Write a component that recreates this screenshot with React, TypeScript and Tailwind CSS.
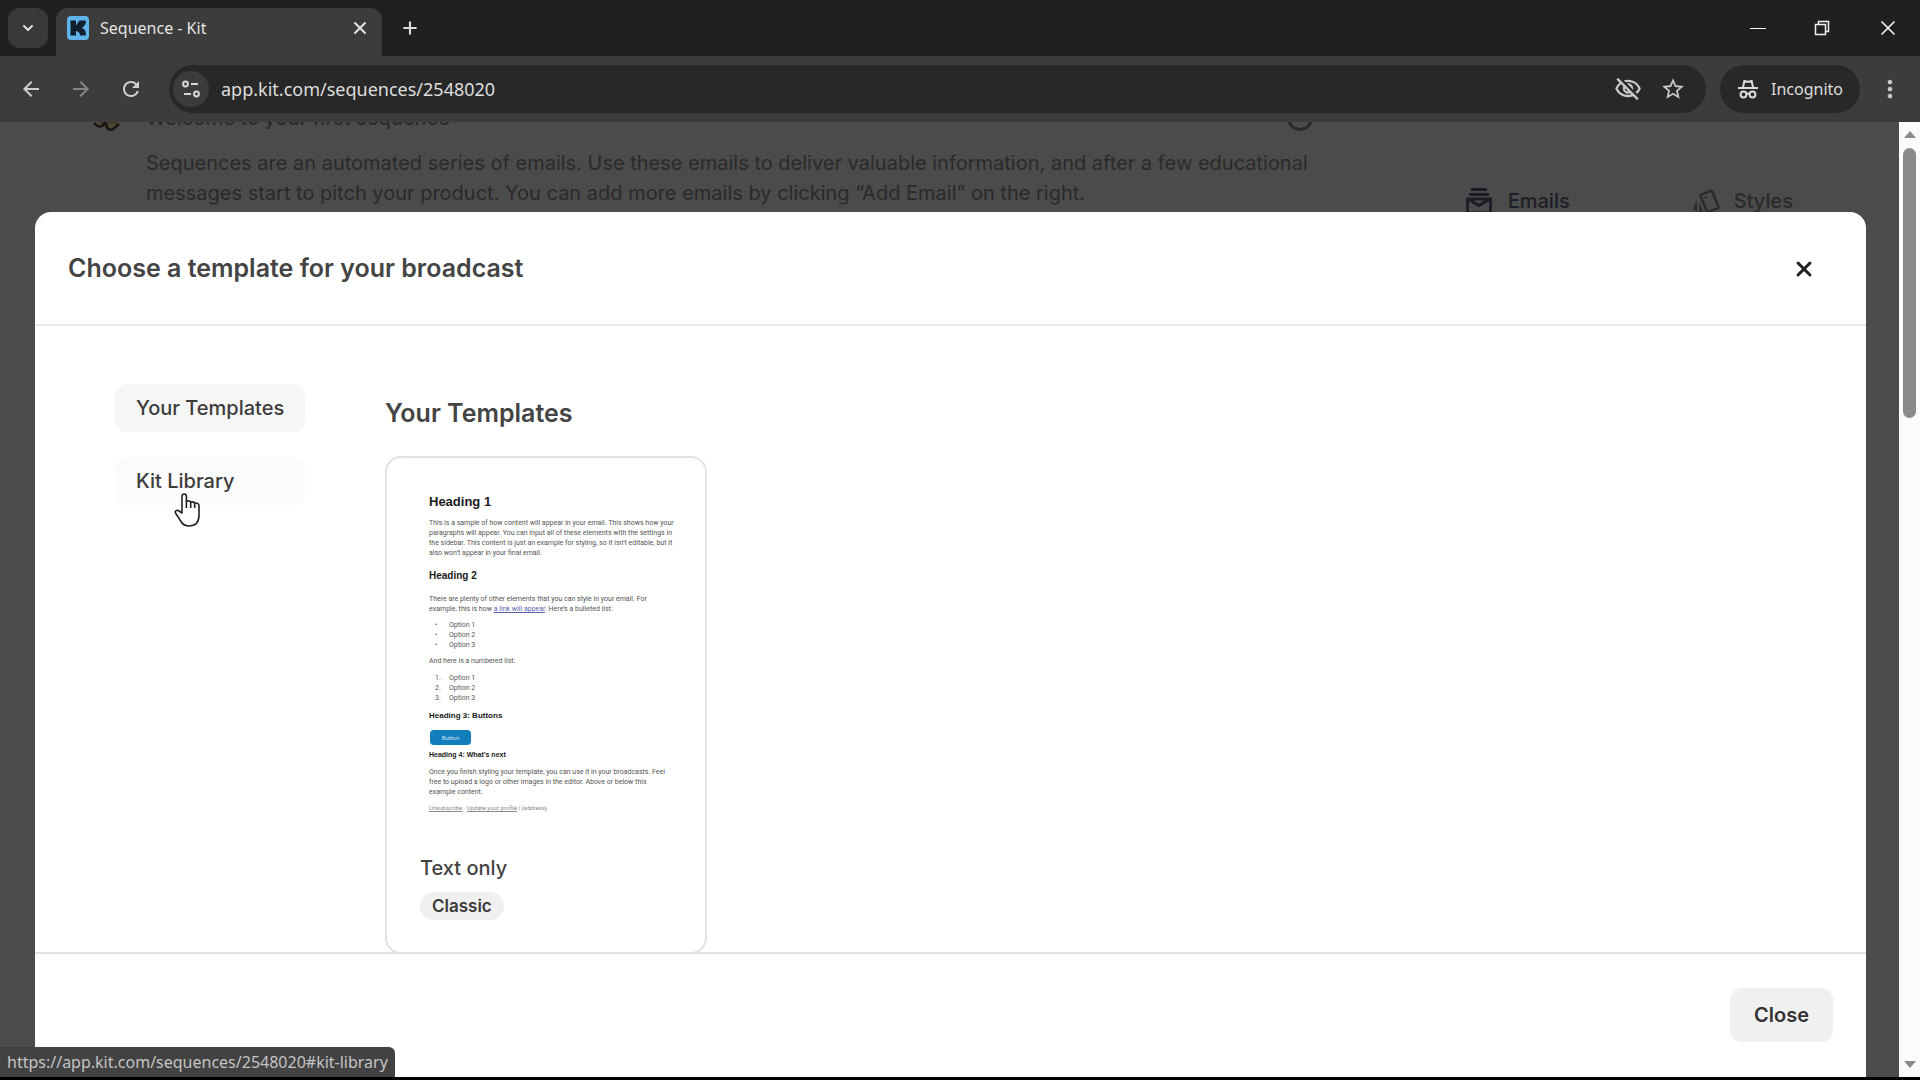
import type { ReactNode } from "react";
import { ChevronDown, Plus, X } from "lucide-react";
import {
  MdArrowBack,
  MdArrowForward,
  MdMoreVert,
  MdOutlineStyle,
  MdOutlineVisibilityOff,
  MdRefresh,
  MdStarBorder,
} from "react-icons/md";

function KitLogo() {
  return (
    <svg viewBox="0 0 24 24" className="size-6 shrink-0" aria-hidden="true">
      <rect x="1" width="22" height="24" rx="4" fill="#5fb4ea" />
      <path
        d="M4.500 4.500h5.500v5l3.500-5h6.500c0 4-2 6.500-4.500 7.300 3 .8 4.500 3.500 4.500 7.700h-6c0-2.500-1.300-4.300-4-4.600v4.600H4.500z"
        fill="#10202e"
      />
    </svg>
  );
}

function SiteInfoIcon() {
  return (
    <svg viewBox="0 0 20 20" className="size-5" fill="none" stroke="#d6d6d6" strokeWidth="2" aria-hidden="true">
      <circle cx="4.500" cy="5" r="2.400" />
      <path d="M10 5h7M3 15h7" />
      <circle cx="15.500" cy="15" r="2.400" />
    </svg>
  );
}

function IncognitoIcon() {
  return (
    <svg viewBox="0 0 22 22" className="size-[22px]" fill="none" stroke="#dcdcdc" strokeWidth="2" aria-hidden="true">
      <path d="M6 9.500 7.300 3q2 .8 3.700.8t3.700-.8L16 9.500M1 10h20" />
      <circle cx="6.500" cy="16.500" r="2.900" />
      <circle cx="15.500" cy="16.500" r="2.900" />
      <path d="M9.400 16q1.600-1 3.200 0" />
    </svg>
  );
}

function RestoreIcon() {
  return (
    <svg viewBox="0 0 16 16" className="size-4" fill="none" stroke="#f0f0f0" strokeWidth="1.500" aria-hidden="true">
      <path d="M1.500 4.500h10v10h-10zM4.500 4.500v-3h10v10h-3" />
    </svg>
  );
}

function EmailsIcon() {
  return (
    <svg viewBox="0 0 26 28" className="h-7 w-[26px]" fill="none" stroke="currentColor" strokeWidth="2.800" aria-hidden="true">
      <path d="M5 2.500h16M3 7.500h20" />
      <path d="M1.500 12h23v14h-23zM3 12.500l10 6 10-6" />
    </svg>
  );
}

function BeeIcon() {
  return (
    <svg viewBox="0 0 28 28" className="size-7" aria-hidden="true">
      <ellipse cx="17" cy="17" rx="10" ry="8" fill="#3f3a20" />
      <path d="M2 20q4 5 8 3l3-4 3 7 4 1 7-6" fill="#4d4832" stroke="#161616" strokeWidth="2.500" />
    </svg>
  );
}

function HandCursor() {
  return (
    <svg
      viewBox="0 0 26 34"
      className="pointer-events-none absolute left-[59px] top-9 h-[34px] w-[26px]"
      fill="#fff"
      stroke="#222"
      strokeWidth="1.600"
      strokeLinejoin="round"
      aria-hidden="true"
    >
      <path d="M8 20V3.500Q8 1 10.200 1t2.200 2.500V8q3.600-.6 4.300 1 3-.4 4 1 4.300-.4 4.300 3v9q0 11-10 11-5.500 0-8-4.500L1.500 20Q.8 18 2.500 17.500t3.300 1z" />
      <path d="M12.400 8v7M16.700 9v6M20.700 10v5" fill="none" />
    </svg>
  );
}

function TabStrip() {
  return (
    <header className="flex h-14 shrink-0 items-end bg-[#202020] pl-2">
      <button aria-label="Search tabs" className="mb-2 grid h-10 w-10 place-items-center rounded-xl bg-[#393939] text-[#e0e0e0]">
        <ChevronDown className="size-4" strokeWidth={3} />
      </button>
      <div className="ml-2 flex h-12 w-[326px] items-center rounded-t-xl bg-[#3c3c3c] pb-2 pl-2.5 pr-2.5">
        <KitLogo />
        <span className="ml-2.5 flex-1 text-base text-[#e4e4e4]">Sequence - Kit</span>
        <button aria-label="Close tab" className="grid size-6 place-items-center text-[#e0e0e0]">
          <X className="size-5" strokeWidth={2.5} />
        </button>
      </div>
      <button aria-label="New tab" className="mb-4 ml-4 grid size-6 place-items-center text-[#dcdcdc]">
        <Plus className="size-5" strokeWidth={2.5} />
      </button>
      <div className="mb-4 ml-auto flex items-center gap-11 pr-5">
        <button aria-label="Minimize" className="grid h-6 w-5 place-items-center">
          <span className="h-px w-4 bg-white" />
        </button>
        <button aria-label="Restore" className="grid h-6 w-5 place-items-center">
          <RestoreIcon />
        </button>
        <button aria-label="Close window" className="grid h-6 w-6 place-items-center text-[#f0f0f0]">
          <X className="size-6" strokeWidth={1.75} />
        </button>
      </div>
    </header>
  );
}

function Toolbar() {
  return (
    <div className="flex h-[66px] shrink-0 items-center bg-[#3c3c3c] pl-[19px] pr-4">
      <button aria-label="Back" className="text-[#d0d0d0]">
        <MdArrowBack className="size-6" />
      </button>
      <button aria-label="Forward" className="ml-[26px] text-[#858585]">
        <MdArrowForward className="size-6" />
      </button>
      <button aria-label="Reload" className="ml-[26px] text-[#d0d0d0]">
        <MdRefresh className="size-6" />
      </button>
      <div className="ml-[26px] flex h-12 min-w-0 flex-1 items-center rounded-full bg-[#282828] pl-1 pr-5">
        <button aria-label="View site information" className="grid size-9 shrink-0 place-items-center rounded-full bg-[#3c3c3c]">
          <SiteInfoIcon />
        </button>
        <input
          aria-label="Address"
          defaultValue="app.kit.com/sequences/2548020"
          className="ml-3 min-w-0 flex-1 bg-transparent text-lg text-[#dedede] outline-none"
        />
        <button aria-label="Third-party cookies blocked" className="text-[#c8c8c8]">
          <MdOutlineVisibilityOff className="size-7" />
        </button>
        <button aria-label="Bookmark this tab" className="ml-[18px] text-[#c8c8c8]">
          <MdStarBorder className="size-[26px]" />
        </button>
      </div>
      <button className="ml-3.5 flex h-12 items-center gap-3 rounded-full bg-[#282828] px-[17px] text-base text-[#dedede]">
        <IncognitoIcon />
        Incognito
      </button>
      <button aria-label="Menu" className="ml-4 text-[#c8c8c8]">
        <MdMoreVert className="size-7" />
      </button>
    </div>
  );
}

function SequencePage() {
  return (
    <div className="flex h-full items-start overflow-hidden bg-[#4b4b4b] pl-[92px] pr-[106px] text-[#2a2a2a]">
      <div className="-mt-[19px] shrink-0">
        <BeeIcon />
      </div>
      <div className="-mt-[19px] ml-[26px] w-[1167px] shrink-0">
        <div className="flex h-[30px] items-center justify-between">
          <h2 className="text-xl font-medium">Welcome to your first sequence</h2>
          <span className="size-[26px] rounded-full border-[3px] border-current" />
        </div>
        <p className="mt-[15px] whitespace-nowrap text-xl leading-[30px]">
          Sequences are an automated series of emails. Use these emails to deliver valuable information, and after a few educational
          <br />
          messages start to pitch your product. You can add more emails by clicking “Add Email” on the right.
        </p>
      </div>
      <nav className="ml-auto mt-16 flex gap-[122px] text-xl font-medium">
        <a href="#emails" className="flex items-center gap-4 text-[#1c1e26]">
          <EmailsIcon />
          Emails
        </a>
        <a href="#styles" className="flex items-center gap-3">
          <MdOutlineStyle className="size-[30px]" />
          Styles
        </a>
      </nav>
    </div>
  );
}

function PreviewItem({ marker, children }: { marker: string; children: ReactNode }) {
  return (
    <li className="flex">
      <span className="w-5 pl-1.5">{marker}</span>
      {children}
    </li>
  );
}

function EmailPreview() {
  return (
    <div className="font-['Roboto',sans-serif] text-[7px] leading-[10px] text-[#555]">
      <h4 className="font-['Liberation_Sans',sans-serif] text-[13px] font-bold leading-4 text-[#1a1a1a]">Heading 1</h4>
      <p className="mt-2 whitespace-nowrap">
        This is a sample of how content will appear in your email. This shows how your
        <br />
        paragraphs will appear. You can input all of these elements with the settings in
        <br />
        the sidebar. This content is just an example for styling, so it isn’t editable, but it
        <br />
        also won’t appear in your final email.
      </p>
      <h5 className="mt-2.5 font-['Liberation_Sans',sans-serif] text-[10px] font-bold leading-4 text-[#1a1a1a]">Heading 2</h5>
      <p className="mt-2.5 whitespace-nowrap">
        There are plenty of other elements that you can style in your email. For
        <br />
        example, this is how <span className="text-[#5a5fb0] underline">a link will appear</span>. Here’s a bulleted list:
      </p>
      <ul className="mt-1.5">
        <PreviewItem marker="•">Option 1</PreviewItem>
        <PreviewItem marker="•">Option 2</PreviewItem>
        <PreviewItem marker="•">Option 3</PreviewItem>
      </ul>
      <p className="mt-1.5">And here is a numbered list:</p>
      <ol className="mt-[7px]">
        <PreviewItem marker="1.">Option 1</PreviewItem>
        <PreviewItem marker="2.">Option 2</PreviewItem>
        <PreviewItem marker="3.">Option 3</PreviewItem>
      </ol>
      <h6 className="mt-[7px] font-['Liberation_Sans',sans-serif] text-[8px] font-bold leading-3 text-[#1a1a1a]">Heading 3: Buttons</h6>
      <div className="ml-px mt-2 grid h-[15px] w-[41px] place-items-center rounded-sm bg-[#117dbb] text-[6px] text-[#cfe6f5]">
        Button
      </div>
      <h6 className="mt-1 font-['Liberation_Sans',sans-serif] text-[7px] font-bold leading-3 text-[#1a1a1a]">Heading 4: What’s next</h6>
      <p className="mt-1.5 whitespace-nowrap">
        Once you finish styling your template, you can use it in your broadcasts. Feel
        <br />
        free to upload a logo or other images in the editor. Above or below this
        <br />
        example content.
      </p>
      <p className="mt-1.5 text-[6px] text-[#8a8a8a]">
        <span className="underline">Unsubscribe</span> · <span className="underline">Update your profile</span> | {"{address}"}
      </p>
    </div>
  );
}

function SideLink({ href, active, children }: { href: string; active?: boolean; children: ReactNode }) {
  return (
    <a
      href={href}
      className={`flex h-12 items-center whitespace-nowrap rounded-xl px-[21px] text-xl font-medium text-[#3c3c3c] ${active ? "bg-[#f6f6f6]" : "bg-[#fbfbfb]"}`}
    >
      {children}
    </a>
  );
}

function TemplateModal() {
  return (
    <section
      role="dialog"
      aria-labelledby="modal-title"
      className="absolute bottom-0 left-[35px] right-[33px] top-[90px] flex flex-col rounded-t-2xl bg-white text-[#444]"
    >
      <header className="flex h-[114px] shrink-0 items-center justify-between border-b-2 border-[#e9e9e9] pl-[33px] pr-[50px] pt-0.5">
        <h1 id="modal-title" className="text-[25px] font-semibold">
          Choose a template for your broadcast
        </h1>
        <button aria-label="Close dialog" className="text-[#222]">
          <X className="size-6" strokeWidth={3} />
        </button>
      </header>
      <div className="flex min-h-0 flex-1 items-start gap-20 overflow-hidden pl-20">
        <nav className="mt-[58px] flex w-[190px] shrink-0 flex-col gap-[25px]">
          <SideLink href="#your-templates" active>
            Your Templates
          </SideLink>
          <div className="relative">
            <SideLink href="#kit-library">Kit Library</SideLink>
            <HandCursor />
          </div>
        </nav>
        <div className="mt-[71px]">
          <h2 className="text-[25px] font-semibold leading-8">Your Templates</h2>
          <article className="mt-[27px] w-[322px] rounded-2xl border-2 border-[#e2e2e2] pb-8 pl-[33px] pt-9">
            <div className="ml-[9px] h-[360px]">
              <EmailPreview />
            </div>
            <h3 className="text-xl font-medium leading-7">Text only</h3>
            <span className="mt-2.5 inline-block rounded-full bg-[#f0f0f0] px-3 text-[17px] font-semibold leading-7 text-[#3a3a3a]">
              Classic
            </span>
          </article>
        </div>
      </div>
      <footer className="flex h-[125px] shrink-0 items-start justify-end border-t-2 border-[#e3e3e3] pr-[33px] pt-[34px]">
        <button className="h-[54px] rounded-xl bg-[#f0f0f0] px-6 text-xl font-semibold text-[#333]">Close</button>
      </footer>
    </section>
  );
}

function Scrollbar() {
  return (
    <div className="flex w-[21px] shrink-0 flex-col items-center bg-[#fcfafa] py-[9px]" aria-hidden="true">
      <span className="border-x-[6px] border-b-[7px] border-x-transparent border-b-[#8a8a8a]" />
      <span className="mt-2.5 h-[270px] w-[13px] rounded-full bg-[#8a8a8a]" />
      <span className="mt-auto border-x-[6px] border-t-[7px] border-x-transparent border-t-[#8a8a8a]" />
    </div>
  );
}

export default function App() {
  return (
    <div className="flex h-screen flex-col overflow-hidden border-b-[3px] border-black font-['Noto_Sans',sans-serif]">
      <TabStrip />
      <Toolbar />
      <main className="flex min-h-0 flex-1 font-['Inter',sans-serif]">
        <div className="relative min-w-0 flex-1">
          <SequencePage />
          <TemplateModal />
          <div className="absolute bottom-0 left-0 flex h-[30px] items-center rounded-tr-md bg-[#424242] px-[7px] font-['Noto_Sans',sans-serif] text-base text-[#c4c4c4]">
            https://app.kit.com/sequences/2548020#kit-library
          </div>
        </div>
        <Scrollbar />
      </main>
    </div>
  );
}
